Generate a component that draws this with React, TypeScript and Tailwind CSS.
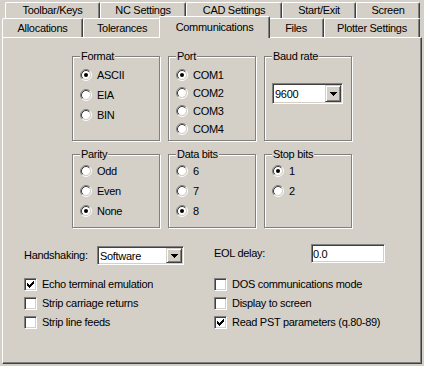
import type { ReactNode } from "react";

// classic 3d edges
const raisedTab =
  "flex items-center justify-center rounded-t-[2px] border-l border-t border-r border-l-white border-t-white border-r-[#404040] shadow-[inset_-1px_0_0_#808080] whitespace-nowrap";

const backRow = [
  { label: "Toolbar/Keys", w: "w-[95px]" },
  { label: "NC Settings", w: "w-[86px]" },
  { label: "CAD Settings", w: "w-[96px]" },
  { label: "Start/Exit", w: "w-[74px]" },
  { label: "Screen", w: "w-[64px]" },
];

const frontRow = [
  { label: "Allocations", w: "w-[81px]" },
  { label: "Tolerances", w: "w-[78px]" },
  { label: "Communications", w: "w-[111px]", active: true },
  { label: "Files", w: "w-[56px]" },
  { label: "Plotter Settings", w: "w-[96px]" },
];

function Radio({ checked }: { checked?: boolean }) {
  return (
    <svg width="12" height="12" viewBox="0 0 12 12" className="shrink-0" aria-hidden>
      <circle cx="6" cy="6" r="4" fill="#fff" />
      <path d="M2.11 9.89A5.5 5.5 0 0 1 9.89 2.11" fill="none" stroke="#808080" />
      <path d="M9.89 2.11A5.5 5.5 0 0 1 2.11 9.89" fill="none" stroke="#fff" />
      <path d="M2.82 9.18A4.5 4.5 0 0 1 9.18 2.82" fill="none" stroke="#404040" />
      <path d="M9.18 2.82A4.5 4.5 0 0 1 2.82 9.18" fill="none" stroke="#d4d0c8" />
      {checked && <circle cx="6" cy="6" r="2" fill="#000" />}
    </svg>
  );
}

function CheckBox({ checked }: { checked?: boolean }) {
  const tops = [2, 3, 4, 3, 2, 1, 0];
  return (
    <span className="flex h-[13px] w-[13px] shrink-0 border border-t-[#808080] border-l-[#808080] border-b-white border-r-white bg-white shadow-[inset_1px_1px_0_#404040,inset_-1px_-1px_0_#d4d0c8]">
      {checked && (
        <svg width="7" height="7" viewBox="0 0 7 7" className="m-[2px]" shapeRendering="crispEdges" aria-hidden>
          {tops.map((y, x) => (
            <rect key={x} x={x} y={y} width="1" height="3" fill="#000" />
          ))}
        </svg>
      )}
    </span>
  );
}

function Sunken({ className, children }: { className: string; children: ReactNode }) {
  return (
    <div
      className={
        "flex border border-t-[#808080] border-l-[#808080] border-b-white border-r-white bg-white shadow-[inset_1px_1px_0_#404040,inset_-1px_-1px_0_#d4d0c8] " +
        className
      }
    >
      {children}
    </div>
  );
}

function Combo({ value, className }: { value: string; className: string }) {
  return (
    <Sunken className={className}>
      <span className="flex flex-1 items-center pl-[2px] pt-px">{value}</span>
      <span className="m-px flex w-[16px] items-center justify-center border border-t-[#d4d0c8] border-l-[#d4d0c8] border-b-[#404040] border-r-[#404040] bg-[#d4d0c8] shadow-[inset_1px_1px_0_#fff,inset_-1px_-1px_0_#808080]">
        <svg width="7" height="4" viewBox="0 0 7 4" shapeRendering="crispEdges" aria-hidden>
          <path d="M0 0H7L3.5 4Z" fill="#000" />
        </svg>
      </span>
    </Sunken>
  );
}

function Group({
  title,
  height,
  children,
}: {
  title: string;
  height: string;
  children: ReactNode;
}) {
  return (
    <div className={"w-[88px] pt-[6px] " + height}>
      <div className="h-full border border-[#808080] px-[7px] shadow-[inset_1px_1px_0_#fff,1px_1px_0_#fff]">
        <div className="-mt-[7px] w-fit bg-[#d4d0c8] px-px leading-[13px]">{title}</div>
        {children}
      </div>
    </div>
  );
}

function Option({ label, checked, row }: { label: string; checked?: boolean; row: string }) {
  return (
    <div className={"flex items-center gap-[5px] " + row}>
      <Radio checked={checked} />
      <span>{label}</span>
    </div>
  );
}

function Tick({ label, checked }: { label: string; checked?: boolean }) {
  return (
    <div className="flex h-[19px] items-center gap-[5px]">
      <CheckBox checked={checked} />
      <span className="whitespace-nowrap">{label}</span>
    </div>
  );
}

export default function App() {
  return (
    <div className="h-[366px] w-[424px] overflow-hidden bg-[#d4d0c8] pt-[2px] font-['Liberation_Sans',Arial,sans-serif] text-[11px] leading-[13px] tracking-[-0.3px] text-black">
      {/* tabs */}
      <div className="ml-[5px] flex h-[16px]">
        {backRow.map((t) => (
          <div key={t.label} className={raisedTab + " h-full " + t.w}>
            {t.label}
          </div>
        ))}
      </div>
      <div className="-mt-[2px] ml-[2px] flex h-[21px] items-end">
        {frontRow.map((t) =>
          t.active ? (
            <div
              key={t.label}
              className={raisedTab + " relative z-10 -mx-[2px] -mb-px h-[22px] bg-[#d4d0c8] pb-px " + t.w}
            >
              {t.label}
            </div>
          ) : (
            <div key={t.label} className={raisedTab + " h-[19px] " + t.w}>
              {t.label}
            </div>
          )
        )}
      </div>

      {/* page */}
      <div className="ml-[2px] h-[327px] w-[420px] border border-l-white border-t-white border-r-[#404040] border-b-[#404040] shadow-[inset_-1px_-1px_0_#808080]">
        <div className="ml-[69px] mt-[12px] flex gap-[8px]">
          <Group title="Format" height="h-[91px]">
            <div className="mt-[2px]">
              <Option label="ASCII" checked row="h-[20px]" />
              <Option label="EIA" row="h-[20px]" />
              <Option label="BIN" row="h-[20px]" />
            </div>
          </Group>
          <Group title="Port" height="h-[91px]">
            <div className="mt-[3px]">
              <Option label="COM1" checked row="h-[18px]" />
              <Option label="COM2" row="h-[18px]" />
              <Option label="COM3" row="h-[18px]" />
              <Option label="COM4" row="h-[18px]" />
            </div>
          </Group>
          <Group title="Baud rate" height="h-[91px]">
            <Combo value="9600" className="mt-[20px] h-[21px] w-[71px]" />
          </Group>
        </div>

        <div className="ml-[69px] mt-[7px] flex gap-[8px]">
          <Group title="Parity" height="h-[80px]">
            <Option label="Odd" row="h-[20px]" />
            <Option label="Even" row="h-[20px]" />
            <Option label="None" checked row="h-[20px]" />
          </Group>
          <Group title="Data bits" height="h-[80px]">
            <Option label="6" row="h-[20px]" />
            <Option label="7" row="h-[20px]" />
            <Option label="8" checked row="h-[20px]" />
          </Group>
          <Group title="Stop bits" height="h-[80px]">
            <Option label="1" checked row="h-[20px]" />
            <Option label="2" row="h-[20px]" />
          </Group>
        </div>

        <div className="ml-[21px] mt-[14px] grid grid-cols-[190px_1fr]">
          <div className="mt-[4px] flex items-center">
            <span className="w-[73px]">Handshaking:</span>
            <Combo value="Software" className="h-[19px] w-[87px]" />
          </div>
          <div className="flex items-center">
            <span className="w-[97px]">EOL delay:</span>
            <Sunken className="h-[19px] w-[74px] items-center pl-px pt-px">0.0</Sunken>
          </div>
        </div>

        <div className="ml-[21px] mt-[10px] grid grid-cols-[190px_1fr]">
          <div>
            <Tick label="Echo terminal emulation" checked />
            <Tick label="Strip carriage returns" />
            <Tick label="Strip line feeds" />
          </div>
          <div>
            <Tick label="DOS communications mode" />
            <Tick label="Display to screen" />
            <Tick label="Read PST parameters (q.80-89)" checked />
          </div>
        </div>
      </div>
    </div>
  );
}
